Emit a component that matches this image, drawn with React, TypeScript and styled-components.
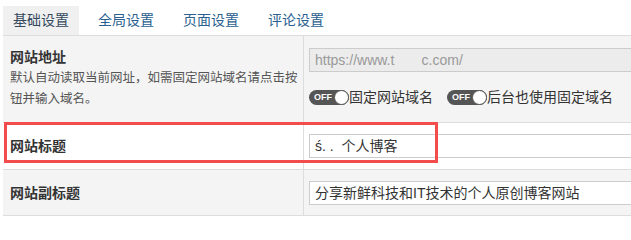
import React from 'react';
import styled, { createGlobalStyle } from 'styled-components';

const GlobalStyle = createGlobalStyle`
  html, body {
    margin: 0;
    padding: 0;
    background: #fff;
    overflow: hidden;
  }
  body {
    font-family: "Liberation Sans", "Noto Sans CJK SC", sans-serif;
    color: #333;
  }
`;

const Page = styled.div`
  width: 631px;
  overflow: hidden;
  padding: 6px 0 0 3px;
`;

const Tabs = styled.div`
  display: flex;
  gap: 9px;
  border-bottom: 1px solid #ddd;
  width: 720px;
`;

const Tab = styled.div<{ $active?: boolean }>`
  height: 29px;
  line-height: 29px;
  padding: 0 10px;
  font-size: 14px;
  color: ${p => (p.$active ? '#34495e' : '#2a5f8f')};
  background: ${p => (p.$active ? '#f0f0f0' : 'transparent')};
`;

const Table = styled.div`
  width: 720px;
`;

const Row = styled.div<{ $striped?: boolean; $height: number }>`
  position: relative;
  display: grid;
  grid-template-columns: 301px 1fr;
  height: ${p => p.$height}px;
  border-bottom: 1px solid #ddd;
  background: ${p => (p.$striped ? '#f4f4f4' : '#fff')};
`;

const LabelCell = styled.div<{ $top?: boolean }>`
  border-right: 1px solid #ddd;
  padding: ${p => (p.$top ? '11px 2px 0 7px' : '0 2px 0 7px')};
  display: flex;
  flex-direction: column;
  justify-content: ${p => (p.$top ? 'flex-start' : 'center')};
`;

const Label = styled.div`
  font-size: 14px;
  line-height: 20px;
  font-weight: bold;
  color: #333;
`;

const Desc = styled.div`
  font-size: 12.5px;
  line-height: 21px;
  color: #555;
  margin-top: 1px;
`;

const FieldCell = styled.div<{ $top?: boolean }>`
  padding: ${p => (p.$top ? '12px 0 0 5px' : '0 0 0 5px')};
  display: flex;
  flex-direction: column;
  justify-content: ${p => (p.$top ? 'flex-start' : 'center')};
`;

const Input = styled.div<{ $disabled?: boolean }>`
  box-sizing: border-box;
  width: 380px;
  height: 24px;
  line-height: 22px;
  padding: 0 5px;
  border: 1px solid #ccc;
  font-size: 14px;
  white-space: pre;
  color: ${p => (p.$disabled ? '#999' : '#333')};
  background: ${p => (p.$disabled ? '#ececec' : '#fff')};
`;

const Switches = styled.div`
  display: flex;
  align-items: center;
  gap: 14px;
  margin-top: 15px;
  height: 20px;
`;

const SwitchItem = styled.div`
  display: flex;
  align-items: center;
  font-size: 14px;
  line-height: 20px;
  color: #333;
`;

const Pill = styled.span`
  position: relative;
  box-sizing: border-box;
  width: 40px;
  height: 15px;
  border-radius: 8px;
  background: #555;
  color: #fff;
  font-size: 9px;
  font-weight: bold;
  line-height: 15px;
  padding-left: 5px;
  font-family: "Liberation Sans", sans-serif;
`;

const Knob = styled.span`
  position: absolute;
  right: 0;
  top: 0;
  box-sizing: border-box;
  width: 15px;
  height: 15px;
  border-radius: 50%;
  background: #fff;
  border: 1.5px solid #555;
`;

const Highlight = styled.div`
  position: absolute;
  left: 1px;
  top: -1px;
  width: 434px;
  height: 41px;
  box-sizing: border-box;
  border: 3px solid #f24c4c;
  pointer-events: none;
`;

const Switch: React.FC<{ label: string }> = ({ label }) => (
  <SwitchItem>
    <Pill>
      OFF
      <Knob />
    </Pill>
    {label}
  </SwitchItem>
);

const tabs = ['基础设置', '全局设置', '页面设置', '评论设置'];

export default function App() {
  return (
    <>
      <GlobalStyle />
      <Page>
        <Tabs>
          {tabs.map((t, i) => (
            <Tab key={t} $active={i === 0}>{t}</Tab>
          ))}
        </Tabs>
        <Table>
          <Row $striped $height={86}>
            <LabelCell $top>
              <Label>网站地址</Label>
              <Desc>默认自动读取当前网址，如需固定网站域名请点击按钮并输入域名。</Desc>
            </LabelCell>
            <FieldCell $top>
              <Input $disabled>{'https://www.t       c.com/'}</Input>
              <Switches>
                <Switch label="固定网站域名" />
                <Switch label="后台也使用固定域名" />
              </Switches>
            </FieldCell>
          </Row>
          <Row $height={46}>
            <LabelCell>
              <Label>网站标题</Label>
            </LabelCell>
            <FieldCell>
              <Input>{'ś. .  个人博客'}</Input>
            </FieldCell>
            <Highlight />
          </Row>
          <Row $striped $height={45}>
            <LabelCell>
              <Label>网站副标题</Label>
            </LabelCell>
            <FieldCell>
              <Input>分享新鲜科技和IT技术的个人原创博客网站</Input>
            </FieldCell>
          </Row>
        </Table>
      </Page>
    </>
  );
}
